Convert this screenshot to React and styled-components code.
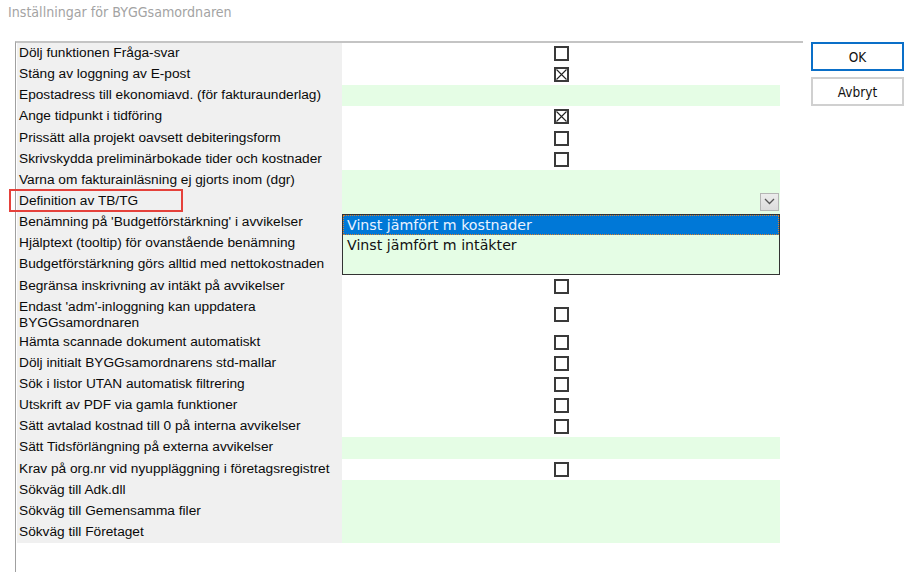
import styled, { createGlobalStyle } from 'styled-components';

const GlobalStyle = createGlobalStyle`
  html, body {
    margin: 0;
    padding: 0;
    background: #fff;
  }
  body {
    font-family: 'Liberation Sans', Arial, sans-serif;
    color: #000;
  }
`;

const settings = [
  { label: 'Dölj funktionen Fråga-svar', type: 'check' },
  { label: 'Stäng av loggning av E-post', type: 'checked' },
  { label: 'Epostadress till ekonomiavd. (för fakturaunderlag)', type: 'text' },
  { label: 'Ange tidpunkt i tidföring', type: 'checked' },
  { label: 'Prissätt alla projekt oavsett debiteringsform', type: 'check' },
  { label: 'Skrivskydda preliminärbokade tider och kostnader', type: 'check' },
  { label: 'Varna om fakturainläsning ej gjorts inom (dgr)', type: 'text' },
  { label: 'Definition av TB/TG', type: 'combo' },
  { label: "Benämning på 'Budgetförstärkning' i avvikelser", type: 'text' },
  { label: 'Hjälptext (tooltip) för ovanstående benämning', type: 'text' },
  { label: 'Budgetförstärkning görs alltid med nettokostnaden', type: 'check' },
  { label: 'Begränsa inskrivning av intäkt på avvikelser', type: 'check' },
  { label: "Endast 'adm'-inloggning kan uppdatera BYGGsamordnaren", type: 'check', tall: true },
  { label: 'Hämta scannade dokument automatiskt', type: 'check' },
  { label: 'Dölj initialt BYGGsamordnarens std-mallar', type: 'check' },
  { label: 'Sök i listor UTAN automatisk filtrering', type: 'check' },
  { label: 'Utskrift av PDF via gamla funktioner', type: 'check' },
  { label: 'Sätt avtalad kostnad till 0 på interna avvikelser', type: 'check' },
  { label: 'Sätt Tidsförlängning på externa avvikelser', type: 'text' },
  { label: 'Krav på org.nr vid nyuppläggning i företagsregistret', type: 'check' },
  { label: 'Sökväg till Adk.dll', type: 'text' },
  { label: 'Sökväg till Gemensamma filer', type: 'text' },
  { label: 'Sökväg till Företaget', type: 'text' },
];

const options = ['Vinst jämfört m kostnader', 'Vinst jämfört m intäkter'];

function CheckBox({ checked }) {
  return (
    <Box>
      {checked && (
        <svg width="11" height="11" viewBox="0 0 11 11">
          <path d="M0.5 0.5 L10.5 10.5 M10.5 0.5 L0.5 10.5" stroke="#222" strokeWidth="1.1" />
        </svg>
      )}
    </Box>
  );
}

function ValueCell({ type }) {
  if (type === 'check' || type === 'checked') {
    return (
      <Value>
        <CheckBox checked={type === 'checked'} />
      </Value>
    );
  }
  if (type === 'combo') {
    return (
      <Value $input>
        <ComboArrow>
          <svg width="11" height="7" viewBox="0 0 11 7">
            <path d="M1 1 L5.5 5.5 L10 1" fill="none" stroke="#555" strokeWidth="1.3" />
          </svg>
        </ComboArrow>
        <DropList>
          {options.map((o, i) => (
            <Option key={o} $active={i === 0}>
              {o}
            </Option>
          ))}
        </DropList>
      </Value>
    );
  }
  return <Value $input />;
}

export default function App() {
  return (
    <>
      <GlobalStyle />
      <Page>
        <Title>Inställningar för BYGGsamordnaren</Title>
        <Body>
          <Panel>
            <Grid>
              {settings.map((s) => (
                <Row key={s.label} $tall={s.tall}>
                  <Label $tall={s.tall}>
                    {s.label}
                    {s.type === 'combo' && <Highlight />}
                  </Label>
                  <ValueCell type={s.type} />
                </Row>
              ))}
            </Grid>
          </Panel>
          <Buttons>
            <Button $primary>OK</Button>
            <Button>Avbryt</Button>
          </Buttons>
        </Body>
      </Page>
    </>
  );
}

const Page = styled.div`
  width: 905px;
  height: 573px;
  overflow: hidden;
  display: flex;
  flex-direction: column;
`;

const Title = styled.div`
  height: 42px;
  padding: 4px 0 0 8px;
  box-sizing: border-box;
  font-family: Tahoma, 'DejaVu Sans Condensed', 'DejaVu Sans', sans-serif;
  font-size: 14.1px;
  color: #a3a3a3;
`;

const Body = styled.div`
  flex: 1;
  display: flex;
  align-items: flex-start;
  padding-left: 15px;
  gap: 8px;
`;

const Panel = styled.div`
  width: 788px;
  height: 531px;
  box-sizing: border-box;
  border-top: 2px solid #c4c4c4;
  border-left: 1px solid #a0a0a0;
  padding-left: 1px;
  margin-top: -1px;
  background: #fff;
`;

const Grid = styled.div`
  width: 763px;
  display: flex;
  flex-direction: column;
`;

const Row = styled.div`
  display: grid;
  grid-template-columns: 325px 438px;
  height: ${(p) => (p.$tall ? '35px' : '21.15px')};
`;

const Label = styled.div`
  position: relative;
  background: #f0f0f0;
  padding: ${(p) => (p.$tall ? '2px 2px 0 2px' : '0 2px 2px 2px')};
  font-size: 13.7px;
  line-height: ${(p) => (p.$tall ? '16px' : '19px')};
  color: #0a0a0a;
  white-space: ${(p) => (p.$tall ? 'normal' : 'nowrap')};
`;

const Highlight = styled.span`
  position: absolute;
  left: -8px;
  top: -2px;
  width: 174px;
  height: 23px;
  box-sizing: border-box;
  border: 2px solid #e5413b;
  pointer-events: none;
`;

const Value = styled.div`
  position: relative;
  display: flex;
  align-items: center;
  justify-content: center;
  background: ${(p) => (p.$input ? '#e5fde5' : '#fff')};
`;

const Box = styled.span`
  width: 15px;
  height: 15px;
  box-sizing: border-box;
  border: 2px solid #3a3a3a;
  background: #fff;
  display: flex;
  align-items: center;
  justify-content: center;
`;

const ComboArrow = styled.span`
  position: absolute;
  right: 1px;
  top: 2px;
  width: 19px;
  height: 18px;
  box-sizing: border-box;
  border: 1px solid #b5b5b5;
  background: linear-gradient(#ececec, #dcdcdc);
  display: flex;
  align-items: center;
  justify-content: center;
`;

const DropList = styled.div`
  position: absolute;
  z-index: 2;
  left: 0;
  top: 23px;
  width: 438px;
  height: 61px;
  box-sizing: border-box;
  border: 1px solid #333;
  background: #e5fde5;
`;

const Option = styled.div`
  height: ${(p) => (p.$active ? '20px' : '21px')};
  box-sizing: border-box;
  padding-left: 3px;
  font-family: 'DejaVu Sans', Verdana, sans-serif;
  font-size: 14.2px;
  line-height: 18px;
  color: ${(p) => (p.$active ? '#eaf2ff' : '#111')};
  background: ${(p) => (p.$active ? '#0078d7' : 'transparent')};
  border: 1px dotted ${(p) => (p.$active ? '#d9802c' : 'transparent')};
`;

const Buttons = styled.div`
  display: flex;
  flex-direction: column;
  gap: 6px;
`;

const Button = styled.button`
  width: 93px;
  height: 29px;
  box-sizing: border-box;
  background: #fff;
  border: ${(p) => (p.$primary ? '2px solid #0a6fc8' : '2px solid #d0d0d0')};
  font-family: Tahoma, 'DejaVu Sans Condensed', 'DejaVu Sans', sans-serif;
  font-size: 13.5px;
  color: #111;
  padding: 0;
  cursor: pointer;
`;
